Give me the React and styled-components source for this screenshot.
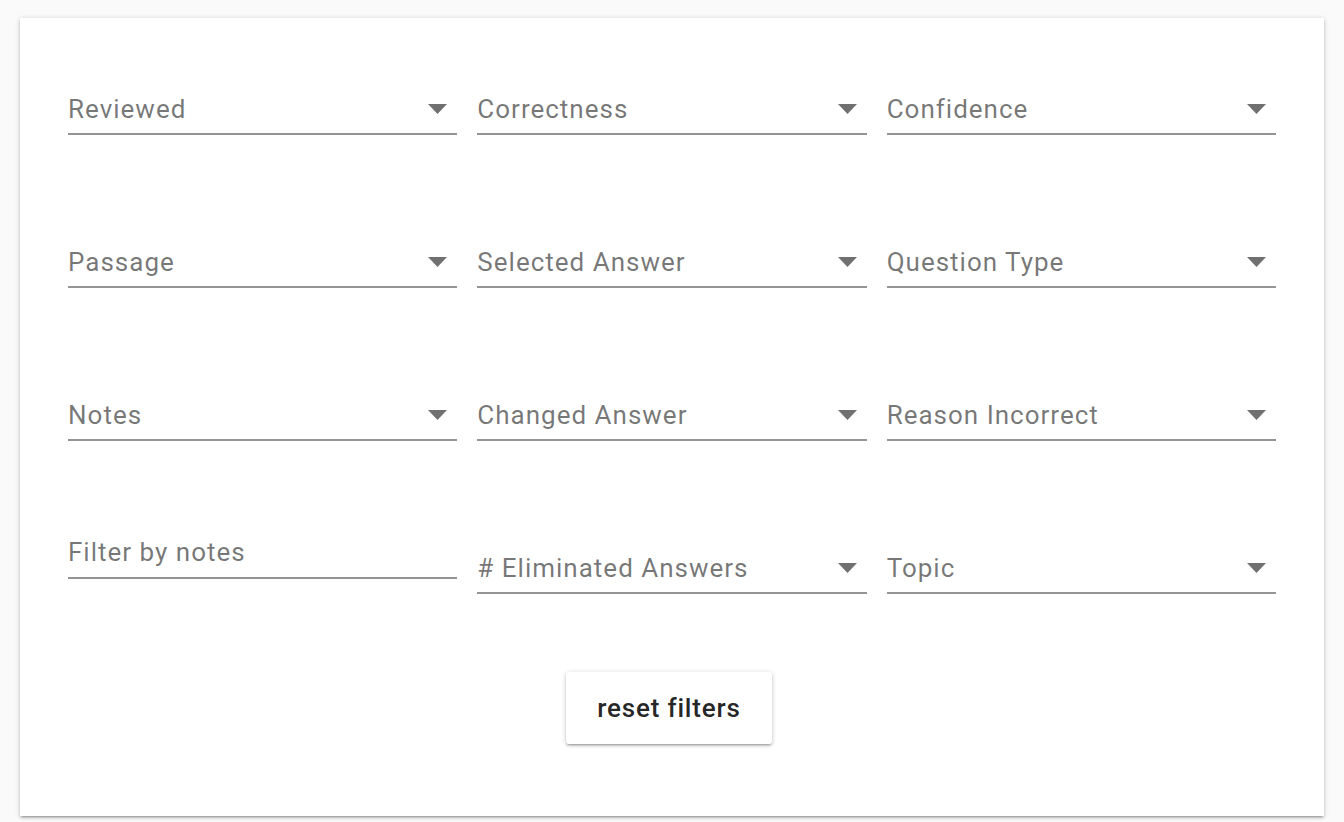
import * as React from "react"
import styled, { createGlobalStyle } from "styled-components"

const filters = [
  "Reviewed",
  "Correctness",
  "Confidence",
  "Passage",
  "Selected Answer",
  "Question Type",
  "Notes",
  "Changed Answer",
  "Reason Incorrect",
  null,
  "# Eliminated Answers",
  "Topic",
]

const ArrowIcon = () => (
  <Arrow viewBox="0 0 19 10" aria-hidden="true">
    <path d="M0 0h19L9.5 10z" />
  </Arrow>
)

const App = () => {
  return (
    <>
      <GlobalStyle />
      <Page>
        <Card>
          <FilterGrid>
            {filters.map((label, index) =>
              label ? (
                <SelectField key={index}>
                  <SelectLabel>{label}</SelectLabel>
                  <ArrowIcon />
                </SelectField>
              ) : (
                <TextInput key={index} placeholder="Filter by notes" />
              )
            )}
          </FilterGrid>
          <Actions>
            <ResetButton type="button">reset filters</ResetButton>
          </Actions>
        </Card>
      </Page>
    </>
  )
}

export default App

const GlobalStyle = createGlobalStyle`
  body {
    margin: 0;
    background: #fafafa;
    font-family: Roboto, "Liberation Sans", sans-serif;
  }
`

const Page = styled.div`
  padding: 18px 20px 6px;
`

const Card = styled.div`
  background: #fff;
  padding: 65px 48px 72px;
  box-shadow: 0px 1px 5px 0px rgba(0, 0, 0, 0.2),
    0px 2px 2px 0px rgba(0, 0, 0, 0.14),
    0px 3px 1px -2px rgba(0, 0, 0, 0.12);
`

const FilterGrid = styled.div`
  display: grid;
  grid-template-columns: repeat(3, 1fr);
  column-gap: 20px;
  row-gap: 101px;
`

const SelectField = styled.div`
  display: flex;
  align-items: center;
  justify-content: space-between;
  height: 52px;
  box-sizing: border-box;
  padding: 2px 10px 0 0;
  border-bottom: 2px solid rgba(0, 0, 0, 0.42);
  cursor: pointer;
`

const SelectLabel = styled.span`
  font-size: 26px;
  letter-spacing: 1px;
  color: rgba(0, 0, 0, 0.54);
`

const Arrow = styled.svg`
  width: 19px;
  height: 10px;
  fill: rgba(0, 0, 0, 0.56);
`

const TextInput = styled.input`
  height: 52px;
  margin: -15px 0 15px;
  box-sizing: border-box;
  padding: 0;
  border: none;
  border-bottom: 2px solid rgba(0, 0, 0, 0.42);
  outline: none;
  font-family: Roboto, "Liberation Sans", sans-serif;
  font-size: 26px;
  letter-spacing: 1px;
  color: rgba(0, 0, 0, 0.87);
  background: transparent;

  &::placeholder {
    color: rgba(0, 0, 0, 0.54);
  }
`

const Actions = styled.div`
  display: flex;
  justify-content: center;
  margin-top: 78px;
`

const ResetButton = styled.button`
  width: 206px;
  height: 72px;
  margin-right: 6px;
  border: none;
  border-radius: 3px;
  background: #fff;
  font-family: Roboto, "Liberation Sans", sans-serif;
  font-size: 26px;
  font-weight: 500;
  letter-spacing: 0.8px;
  color: rgba(0, 0, 0, 0.87);
  cursor: pointer;
  box-shadow: 0px 1px 5px 0px rgba(0, 0, 0, 0.2),
    0px 2px 2px 0px rgba(0, 0, 0, 0.14),
    0px 3px 1px -2px rgba(0, 0, 0, 0.12);
`
